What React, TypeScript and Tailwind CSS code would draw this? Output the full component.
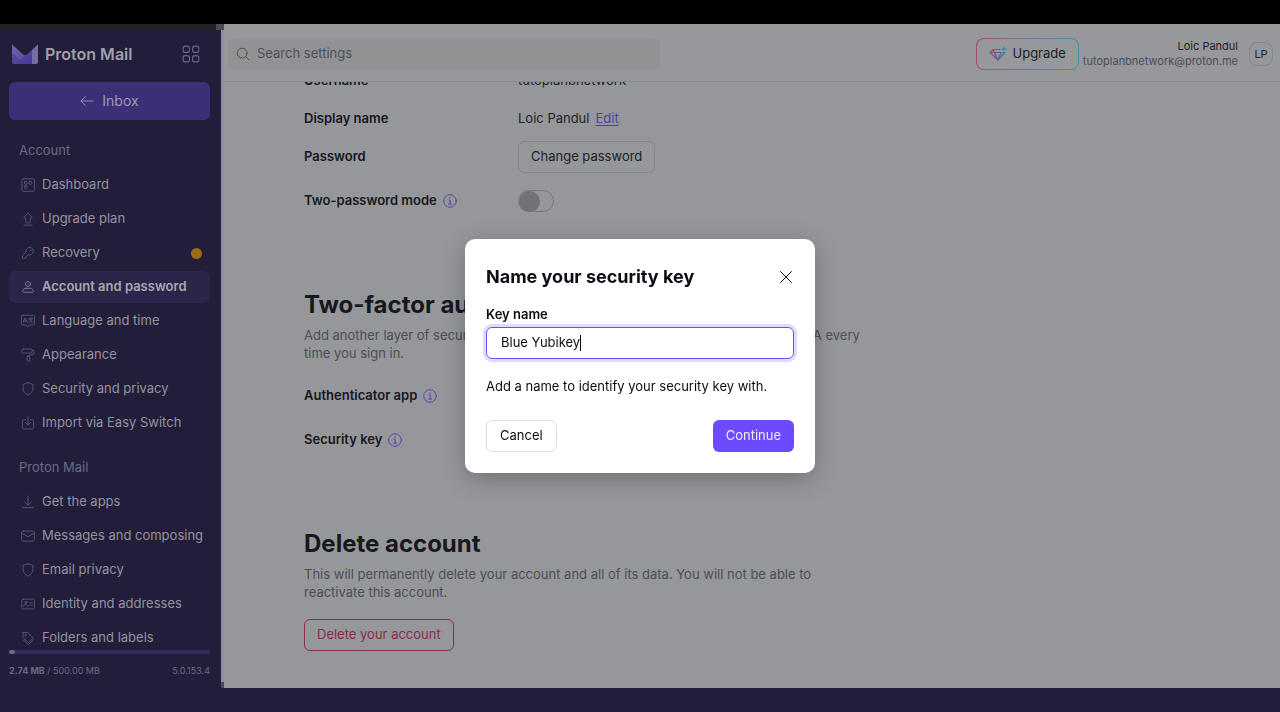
import type { ReactNode } from 'react';

type IconProps = { className?: string; children: ReactNode };

function Icon({ className = 'size-3.5', children }: IconProps) {
  return (
    <svg
      viewBox="0 0 16 16"
      className={`shrink-0 ${className}`}
      fill="none"
      stroke="currentColor"
      strokeWidth="1"
      strokeLinecap="round"
      strokeLinejoin="round"
      aria-hidden="true"
    >
      {children}
    </svg>
  );
}

const icons = {
  dashboard: (
    <>
      <rect x="1" y=".8" width="14.4" height="14.4" rx="1.8" />
      <rect x="4" y="4" width="3" height="3" rx=".5" />
      <rect x="9" y="4" width="3.4" height="3" rx=".8" />
      <rect x="4" y="9" width="3" height="3" rx=".8" />
    </>
  ),
  upgrade: (
    <path d="M3.4 15h9.200M8 1.200 3.200 6.200c-.2.300 0 .6.300.6h2v5c0 .4.300.7.700.7h3.600c.4 0 .7-.3.7-.7v-5h2c.3 0 .5-.3.3-.6L8 1.200Z" />
  ),
  key: (
    <>
      <path d="M10 1.4a4.3 4.3 0 0 0-4.2 5.3L1.7 10.9v2.6c0 .5.4.8.8.8h1.7c.4 0 .7-.2.9-.5l.7-1.5c.1-.3.4-.5.7-.6l1-.3.6-1.5A4.4 4.4 0 1 0 10 1.4Z" />
      <circle cx="11.2" cy="4.8" r=".8" fill="currentColor" stroke="none" />
    </>
  ),
  user: (
    <>
      <circle cx="8" cy="4.6" r="2.8" />
      <path d="M5.6 9.5h4.8c1.3 0 2.4.7 3 1.8l.7 1.3c.4.7 0 1.4-.8 1.4H2.7c-.8 0-1.2-.7-.8-1.4l.7-1.3c.6-1.1 1.7-1.8 3-1.8Z" />
    </>
  ),
  language: (
    <>
      <path d="M1.6 1.5h12.8c.6 0 1.1.5 1.1 1.1v8.8c0 .6-.5 1.1-1.1 1.1H9.5L7.5 15l-2-2.500H1.600c-.6 0-1.100-.5-1.100-1.100V2.600c0-.6.5-1.100 1.100-1.100Z" />
      <path d="M2.600 9.500 4.700 4.500l2.100 5M3.300 8h2.800M8.800 5.500h4.600M11.100 4.300v1.200M12.600 5.500c-.5 2-1.800 3.400-3.600 4.100M9.600 5.500c.5 2 1.800 3.400 3.600 4.100" />
    </>
  ),
  roller: (
    <>
      <rect x="1.200" y="1.200" width="11.600" height="4.600" rx="1.400" />
      <path d="M12.800 2.600h.8c.8 0 1.400.6 1.400 1.400v1.800c0 .8-.5 1.400-1.300 1.600l-4.300.8c-.5.100-.9.500-.9 1" />
      <rect x="7" y="9.300" width="3" height="5.500" rx=".8" />
    </>
  ),
  shield: <path d="M8 .9 2.4 2.8v4.4c0 3.4 2.2 6.2 5.6 7.9 3.4-1.7 5.6-4.5 5.6-7.9V2.8L8 .9Z" />,
  importBox: (
    <>
      <path d="M5 4.200H3.200c-.9 0-1.600.7-1.600 1.600v7.400c0 .9.7 1.600 1.600 1.600h9.600c.9 0 1.600-.7 1.600-1.600V5.800c0-.9-.7-1.600-1.600-1.600H11" />
      <path d="M8 .8v9.400M5 7.400l3 2.900 3-2.900" />
    </>
  ),
  download: <path d="M1.600 14.400h12.800M8 1.200v10.200M4.400 8 8 11.500 11.600 8" />,
  mail: (
    <>
      <rect x=".8" y="2.300" width="14.400" height="11.600" rx="1.800" />
      <path d="m1.200 4.800 5.600 3.500c.8.500 1.600.5 2.400 0l5.600-3.500" />
    </>
  ),
  identity: (
    <>
      <rect x=".8" y="2.500" width="14.600" height="11" rx="1.600" />
      <circle cx="5.500" cy="6.300" r="1.300" />
      <path d="M3 10.800c.3-1.500 1.200-2.300 2.500-2.300S7.700 9.300 8 10.800M10 6.700h3M10 9.300h3" />
    </>
  ),
  tags: (
    <>
      <path d="M2.300 1.600h4.600c.4 0 .7.100 1 .4l5 5c.6.600.6 1.400 0 2l-3.400 3.400c-.6.600-1.400.600-2 0L2.700 7.700c-.300-.300-.400-.600-.400-1V1.600Z" />
      <path d="m2.800 10.400 4.500 4.300c.6.600 1.400.600 2 0l5.100-4.900" />
      <circle cx="5.200" cy="4.600" r=".7" />
    </>
  ),
};

type NavItem = { label: string; icon: keyof typeof icons; active?: boolean; alert?: boolean };

const navGroups: { title: string; items: NavItem[] }[] = [
  {
    title: 'Account',
    items: [
      { label: 'Dashboard', icon: 'dashboard' },
      { label: 'Upgrade plan', icon: 'upgrade' },
      { label: 'Recovery', icon: 'key', alert: true },
      { label: 'Account and password', icon: 'user', active: true },
      { label: 'Language and time', icon: 'language' },
      { label: 'Appearance', icon: 'roller' },
      { label: 'Security and privacy', icon: 'shield' },
      { label: 'Import via Easy Switch', icon: 'importBox' },
    ],
  },
  {
    title: 'Proton Mail',
    items: [
      { label: 'Get the apps', icon: 'download' },
      { label: 'Messages and composing', icon: 'mail' },
      { label: 'Email privacy', icon: 'shield' },
      { label: 'Identity and addresses', icon: 'identity' },
      { label: 'Folders and labels', icon: 'tags' },
    ],
  },
];

function Logo() {
  return (
    <div className="flex items-center gap-[7px]">
      <svg viewBox="0 0 26 20" className="h-5 w-[26px]" aria-hidden="true">
        <defs>
          <linearGradient id="flap" x1="0" y1="0" x2="1" y2="1">
            <stop offset="0" stopColor="#7265a6" />
            <stop offset="1" stopColor="#5c4d9e" />
          </linearGradient>
          <linearGradient id="body" x1="0" y1="0" x2="1" y2="1">
            <stop offset="0" stopColor="#5e50a0" />
            <stop offset="1" stopColor="#45359a" />
          </linearGradient>
        </defs>
        <path d="M0 .6 10.600 10.200c1.400 1.200 3.400 1.200 4.800 0L26 .6V18c0 1.100-.9 2-2 2H2c-1.100 0-2-.9-2-2V.6Z" fill="url(#body)" />
        <path d="M0 .6 10.600 10.200c.9.800 2 1.100 3 .9L9.500 14.500c-1 .8-2.300.8-3.200 0L0 8.800V.6Z" fill="url(#flap)" />
        <path d="M20 6 26 .6V18c0 1.100-.9 2-2 2h-4V6Z" fill="#786ca8" />
      </svg>
      <span className="text-base leading-5 font-semibold text-[#a19fa8]">Proton Mail</span>
    </div>
  );
}

function Sidebar() {
  return (
    <aside className="flex w-[221px] shrink-0 flex-col bg-[#221e3a]">
      <div className="flex h-1.5 shrink-0 justify-end bg-[#222222]">
        <span className="w-[5px] bg-[#4b4b4b]" />
      </div>
      <div className="flex h-12 shrink-0 items-center justify-between pr-[21px] pl-3">
        <Logo />
        <button type="button" aria-label="Proton apps" className="text-[#68658a]">
          <Icon className="size-[18px]">
            <rect x="1" y="1" width="5.600" height="5.600" rx="2" />
            <rect x="9.400" y="1" width="5.600" height="5.600" rx="2" />
            <rect x="1" y="9.400" width="5.600" height="5.600" rx="2" />
            <rect x="9.400" y="9.400" width="5.600" height="5.600" rx="2" />
          </Icon>
        </button>
      </div>
      <a
        href="#inbox"
        className="mt-1 mr-[11px] ml-[9px] flex h-[38px] shrink-0 items-center justify-center gap-2 rounded-md bg-[#3d2e78] text-sm text-[#9d98b2]"
      >
        <Icon>
          <path d="M15 8H1.200M6 3 1.200 8 6 13" />
        </Icon>
        Inbox
      </a>
      <nav className="mt-[15px] flex min-h-0 flex-1 flex-col gap-[13px] overflow-hidden pr-[11px] pl-[9px]">
        {navGroups.map((group) => (
          <section key={group.title}>
            <h2 className="flex h-8 items-center px-2.5 text-[13px] text-[#6c6888]">{group.title}</h2>
            <ul>
              {group.items.map((item) => (
                <li key={item.label} className="pt-0.5">
                  <a
                    href="#settings"
                    className={`flex h-8 items-center gap-[7px] rounded-md pr-2 pl-3 text-[13px] whitespace-nowrap ${
                      item.active ? 'bg-[#2a2549] font-semibold text-[#a9a7b3]' : 'text-[#95929f]'
                    }`}
                  >
                    <span className={item.active ? 'text-[#85819c]' : 'text-[#5d597e]'}>
                      <Icon>{icons[item.icon]}</Icon>
                    </span>
                    {item.label}
                    {item.alert && <span className="ml-auto size-[11px] rounded-full bg-[#9c6a15]" />}
                  </a>
                </li>
              ))}
            </ul>
          </section>
        ))}
      </nav>
      <div className="shrink-0 pr-[11px] pb-2.5 pl-[9px]">
        <div className="h-1 rounded-full bg-[#332a62]">
          <div className="h-1 w-1.5 rounded-full bg-[#6b6496]" />
        </div>
        <div className="mt-2.5 flex items-center justify-between text-[9px] leading-3.5 text-[#6c6888]">
          <span>
            <strong className="font-bold">2.74 MB</strong> / 500.00 MB
          </span>
          <span>5.0.153.4</span>
        </div>
      </div>
    </aside>
  );
}

function TopBar() {
  return (
    <header className="flex h-[58px] shrink-0 items-center justify-between border-b border-[#898a90] bg-[#97989b] pt-[3px] pr-[7px] pl-1">
      <label className="flex h-8 w-[432px] items-center gap-[7px] rounded-md bg-[#919294] px-2 text-[#45474b]">
        <Icon>
          <circle cx="7" cy="7" r="5.600" />
          <path d="m11.200 11.200 3.600 3.600" />
        </Icon>
        <input
          type="search"
          aria-label="Search settings"
          placeholder="Search settings"
          className="min-w-0 flex-1 bg-transparent text-[13px] outline-none placeholder:text-[#4e5054]"
        />
      </label>
      <div className="flex items-center gap-1">
        <button type="button" className="rounded-lg bg-linear-to-r from-[#a54a6e] via-[#71709a] to-[#3f93ae] p-px">
          <span className="flex h-[30px] items-center gap-1.5 rounded-[7px] bg-[#97989b] px-3 text-[13px] text-[#1d1f24]">
            <svg
              viewBox="0 0 18 16"
              className="h-4 w-[18px]"
              fill="none"
              stroke="url(#gem)"
              strokeWidth="1.200"
              strokeLinejoin="round"
              strokeLinecap="round"
              aria-hidden="true"
            >
              <defs>
                <linearGradient id="gem" x1="0" y1="0" x2="18" y2="0" gradientUnits="userSpaceOnUse">
                  <stop offset="0" stopColor="#a8446e" />
                  <stop offset=".5" stopColor="#5c5a9c" />
                  <stop offset="1" stopColor="#2c93ae" />
                </linearGradient>
              </defs>
              <path d="M11 3.500H4L1.200 6.500 8.800 14.200 16 6.500M1.200 6.500H16M5.400 6.500l3.400 7.700 3.400-7.700M4 3.500l1.400 3M15 1v3.600M13.200 2.800h3.600" />
            </svg>
            Upgrade
          </span>
        </button>
        <div className="flex items-center gap-[11px]">
          <div className="text-right text-[11px] leading-[15px]">
            <div className="text-[#1d1f24]">Loic Pandul</div>
            <div className="text-[#4c4e54]">tutoplanbnetwork@proton.me</div>
          </div>
          <button type="button" aria-label="Account menu" className="size-6 rounded-lg border border-[#85868b] text-[11px] text-[#1d1f24]">
            LP
          </button>
        </div>
      </div>
    </header>
  );
}

function Row({ label, info, children }: { label: string; info?: boolean; children?: ReactNode }) {
  return (
    <div className="flex h-8 items-center">
      <div className="flex w-[214px] shrink-0 items-center gap-1.5 text-[13px] font-semibold text-[#17181d]">
        {label}
        {info && (
          <button type="button" aria-label={`More about ${label}`} className="text-[#4f3da8]">
            <Icon>
              <circle cx="8" cy="8" r="7.200" />
              <path d="M6.800 7h1.400v4.500M6.400 11.500h3.500" />
              <circle cx="8" cy="4.600" r=".8" fill="currentColor" stroke="none" />
            </Icon>
          </button>
        )}
      </div>
      <div className="flex items-center gap-1.5 text-[13px] text-[#1d1f24]">{children}</div>
    </div>
  );
}

function SectionIntro({ title, children }: { title: string; children: ReactNode }) {
  return (
    <div>
      <h2 className="text-2xl leading-8 font-bold text-[#17181d]">{title}</h2>
      <p className="mt-[5px] max-w-[560px] text-[13px] leading-[18px] text-[#4c4e54]">{children}</p>
    </div>
  );
}

function Settings() {
  return (
    <main className="min-h-0 flex-1 overflow-hidden bg-[#96979b] px-20">
      <div className="-mt-[17px] flex flex-col gap-[72px]">
        <section>
          <div className="flex flex-col gap-1.5">
            <Row label="Username">tutoplanbnetwork</Row>
            <Row label="Display name">
              Loic Pandul
              <a href="#edit" className="text-[#4f3da8] underline underline-offset-2">
                Edit
              </a>
            </Row>
            <Row label="Password">
              <button type="button" className="h-8 rounded-md border border-[#85868b] px-3">
                Change password
              </button>
            </Row>
          </div>
          <div className="mt-3">
            <Row label="Two-password mode" info>
              <label className="flex h-[22px] w-9 items-center rounded-full border border-[#77787c]">
                <input
                  type="checkbox"
                  role="switch"
                  aria-label="Two-password mode"
                  className="size-[21px] appearance-none rounded-full bg-[#717275]"
                />
              </label>
            </Row>
          </div>
        </section>
        <section>
          <SectionIntro title="Two-factor authentication">
            Add another layer of security to your account. You’ll need to verify yourself with 2FA every time you sign in.
          </SectionIntro>
          <div className="mt-[18px] flex flex-col gap-3">
            <Row label="Authenticator app" info />
            <Row label="Security key" info />
          </div>
        </section>
        <section>
          <SectionIntro title="Delete account">
            This will permanently delete your account and all of its data. You will not be able to reactivate this account.
          </SectionIntro>
          <button type="button" className="mt-[18px] h-8 rounded-md border border-[#8e2f4a] px-3 text-[13px] text-[#8a2c47]">
            Delete your account
          </button>
        </section>
      </div>
    </main>
  );
}

function SecurityKeyDialog() {
  return (
    <div className="fixed inset-0 flex items-center justify-center">
      <form
        role="dialog"
        aria-labelledby="dialog-title"
        onSubmit={(event) => event.preventDefault()}
        className="w-[350px] rounded-[10px] bg-white px-[21px] pt-[22px] pb-[21px] text-[13px] text-[#0c0c14] shadow-[0_6px_24px_rgba(0,0,0,0.25)]"
      >
        <div className="flex h-8 items-center justify-between">
          <h1 id="dialog-title" className="text-lg font-bold">
            Name your security key
          </h1>
          <button type="button" aria-label="Close">
            <Icon className="size-4">
              <path d="m2.500 2.500 11 11M13.500 2.500l-11 11" />
            </Icon>
          </button>
        </div>
        <label htmlFor="key-name" className="mt-3 block leading-[18px] font-semibold">
          Key name
        </label>
        <div className="mt-1 flex h-8 items-center rounded-md border border-[#6d4aff] px-3.5 ring-3 ring-[#6d4aff]/20">
          <input id="key-name" type="text" defaultValue="Blue Yubikey" className="field-sizing-content bg-transparent outline-none" />
          <span className="h-4 w-px bg-[#0c0c14]" />
        </div>
        <p className="mt-[18px] leading-[18px]">Add a name to identify your security key with.</p>
        <div className="mt-[25px] flex justify-between">
          <button type="button" className="h-8 rounded-md border border-[#dddce2] px-[13px]">
            Cancel
          </button>
          <button type="submit" className="h-8 rounded-md bg-[#6d4aff] px-[13px] text-[#efebff]">
            Continue
          </button>
        </div>
      </form>
    </div>
  );
}

export default function App() {
  return (
    <div className="flex h-screen flex-col bg-[#211e3a] font-['Inter',sans-serif]">
      <div className="h-6 shrink-0 bg-black" />
      <div className="flex min-h-0 flex-1">
        <Sidebar />
        <div className="flex w-[3px] shrink-0 flex-col justify-between bg-[#8f8ea3]">
          <span className="h-1.5 bg-[#4b4b4b]" />
          <span className="h-1.5 bg-[#4b4a5a]" />
        </div>
        <div className="flex min-w-0 flex-1 flex-col">
          <TopBar />
          <Settings />
        </div>
      </div>
      <div className="h-6 shrink-0" />
      <SecurityKeyDialog />
    </div>
  );
}
